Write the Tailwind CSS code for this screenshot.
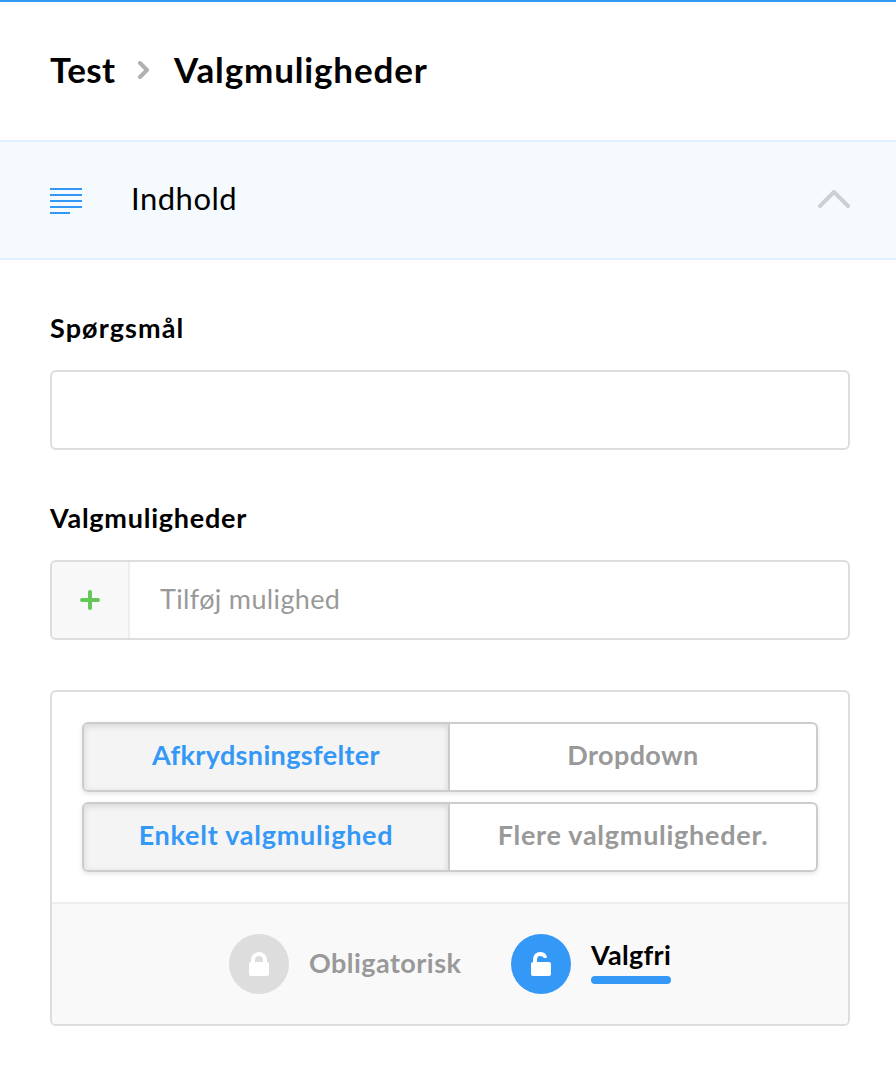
<!DOCTYPE html>
<html lang="da">
<head>
    <meta charset="UTF-8" />
    <meta name="viewport" content="width=device-width, initial-scale=1.0" />
    <title>Valgmuligheder</title>
    <script src="https://cdn.jsdelivr.net/npm/@tailwindcss/browser@4"></script>
</head>
<body class="bg-white text-black font-['Lato',sans-serif] text-[27px]">
<header class="h-[140px] border-t-2 border-[#3498f6] px-[50px] pb-0.5 flex items-center">
    <h1 class="flex items-center text-[35px] leading-[40px] font-bold">
        <span class="w-[88px] pb-0.5 tracking-[0.4px]">Test</span>
        <svg class="w-3 h-[18px] mr-6" viewBox="0 0 12 18" fill="none" stroke="#b0b0b0" stroke-width="4" stroke-linecap="round" stroke-linejoin="round">
            <path d="M2 2l7 7-7 7" />
        </svg>
        <span class="pb-0.5 tracking-[0.85px]">Valgmuligheder</span>
    </h1>
</header>

<section class="h-[120px] border-y-2 border-[#e0effd] bg-[#f5faff] pl-[50px] pr-[46px] flex items-center">
    <svg class="w-8 h-[26px] mt-0.5" viewBox="0 0 32 26" fill="#3498f6" shape-rendering="crispEdges">
        <path d="M0 0h32v2H0zM0 6h32v2H0zM0 12h32v2H0zM0 18h32v2H0zM0 24h20v2H0z" />
    </svg>
    <h2 class="ml-[49px] mb-1 text-[31px] leading-[40px] tracking-[0.5px]">Indhold</h2>
    <svg class="ml-auto mb-0.5 w-8 h-[18px]" viewBox="0 0 32 18" fill="none" stroke="#ced1d4" stroke-width="4" stroke-linecap="round" stroke-linejoin="round">
        <path d="M2 16L16 2l14 14" />
    </svg>
</section>

<main class="pl-[50px] pr-[46px] pt-[50px]">
    <label for="question" class="block h-[60px] leading-9 font-bold tracking-[1.1px]">Spørgsmål</label>
    <input type="text" id="question" class="block w-full h-20 px-[30px] border-2 border-[#dddddd] rounded-md" />

    <label for="option" class="block h-[60px] leading-9 font-bold mt-[50px] tracking-[0.75px]">Valgmuligheder</label>
    <div class="flex h-20 border-2 border-[#dddddd] rounded-md overflow-hidden">
        <button type="button" class="w-[78px] shrink-0 bg-[#f8f8f8] border-r-2 border-[#eeeeee] flex items-center justify-center">
            <svg class="w-5 h-5" viewBox="0 0 20 20" fill="none" stroke="#62c858" stroke-width="4" stroke-linecap="round">
                <path d="M10 2v16M2 10h16" />
            </svg>
        </button>
        <input type="text" id="option" placeholder="Tilføj mulighed" class="grow px-[30px] pb-px tracking-[0.35px] placeholder:text-[#999999]" />
    </div>

    <div class="mt-[50px] h-[336px] border-2 border-[#dddddd] rounded-md overflow-hidden">
        <div class="h-[210px] p-[30px] flex flex-col gap-2.5 font-bold text-[#999999]">
            <div class="flex h-[70px] border-2 border-[#cccccc] rounded-md shadow-[0_2px_4px_rgba(0,0,0,0.1)]">
                <button type="button" class="w-[366px] pb-[3px] border-r-2 border-[#cccccc] rounded-l-sm bg-[#f4f4f4] text-[#3498f6] tracking-[0.35px] shadow-[inset_0_2px_6px_rgba(0,0,0,0.13)]">Afkrydsningsfelter</button>
                <button type="button" class="grow pb-[3px] tracking-[0.4px]">Dropdown</button>
            </div>
            <div class="flex h-[70px] border-2 border-[#cccccc] rounded-md shadow-[0_2px_4px_rgba(0,0,0,0.1)]">
                <button type="button" class="w-[366px] pb-[3px] border-r-2 border-[#cccccc] rounded-l-sm bg-[#f4f4f4] text-[#3498f6] tracking-[0.75px] shadow-[inset_0_2px_6px_rgba(0,0,0,0.13)]">Enkelt valgmulighed</button>
                <button type="button" class="grow pb-[3px] tracking-[0.73px]">Flere valgmuligheder.</button>
            </div>
        </div>
        <div class="h-[122px] border-t-2 border-[#eeeeee] bg-[#f9f9f9] flex items-center justify-center font-bold">
            <div class="flex items-center">
                <span class="size-[60px] rounded-full bg-[#dddddd] flex items-center justify-center">
                    <svg class="w-5 h-6" viewBox="0 0 20 24" fill="#fff">
                        <path fill-rule="evenodd" d="M2 10V8a8 8 0 0 1 16 0v2a2 2 0 0 1 2 2v10a2 2 0 0 1-2 2H2a2 2 0 0 1-2-2V12a2 2 0 0 1 2-2zM6 10h8V8a4 4 0 0 0-8 0z" />
                    </svg>
                </span>
                <span class="ml-5 w-[152px] pb-px whitespace-nowrap text-[#999999] tracking-[0.45px]">Obligatorisk</span>
            </div>
            <div class="flex items-center ml-[50px]">
                <span class="size-[60px] rounded-full bg-[#3498f6] flex items-center justify-center">
                    <svg class="w-5 h-6" viewBox="0 0 20 24" fill="#fff">
                        <path d="M2 10V7a7 7 0 0 1 7-7a7 7 0 0 1 7 5q0 1-1.500 1H13q-1-2-4-2q-3 0-3 4v2h12a2 2 0 0 1 2 2v10a2 2 0 0 1-2 2H2a2 2 0 0 1-2-2V12a2 2 0 0 1 2-2z" />
                    </svg>
                </span>
                <span class="ml-5 w-20 pb-1 flex flex-col">
                    <span class="leading-[30px] tracking-[0.3px]">Valgfri</span>
                    <span class="mt-1.5 h-2 rounded-full bg-[#3498f6]"></span>
                </span>
            </div>
        </div>
    </div>
</main>
</body>
</html>
